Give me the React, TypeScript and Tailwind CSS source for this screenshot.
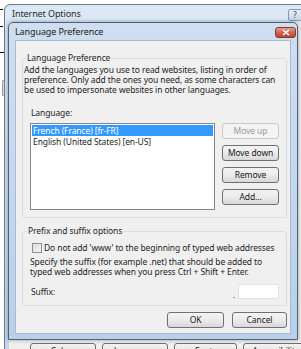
import React from 'react';

const Btn = ({ label, disabled = false, className = '' }: { label: string; disabled?: boolean; className?: string }) => (
  <div
    className={`flex h-[16px] shrink-0 items-center justify-center rounded-[3px] border ${
      disabled
        ? 'border-[#c5c9cc] bg-[#f4f4f4] text-[#9a9a9a]'
        : 'border-[#707070] bg-gradient-to-b from-[#f3f3f3] via-[#ebebeb] to-[#d8d8d8] text-[#1a1a1a]'
    } ${className}`}
  >
    {label}
  </div>
);

const App: React.FC = () => {
  return (
    <div className="relative h-[349px] w-[301px] overflow-hidden whitespace-nowrap bg-white font-['Noto_Sans',sans-serif] text-[8.5px] leading-[10px] tracking-[-0.1px] text-[#1e1e1e]">
      {/* bits of windows behind */}
      <div className="absolute left-0 top-[9px] h-[1px] w-[3px] bg-black" />
      <div className="absolute left-0 top-[26px] h-[1px] w-[3px] bg-black" />
      <div className="absolute left-0 top-[52px] h-[1px] w-[4px] bg-black" />
      <div className="absolute left-[2px] top-[80px] h-[16px] w-[3px] rounded-[1px] border border-[#9a9a9a] bg-[#e4e4e4]" />

      {/* Internet Options window */}
      <div className="absolute left-[4px] top-[4px] flex h-[360px] w-[310px] flex-col rounded-t-[6px] border border-[#6a7b90] bg-gradient-to-b from-[#dce8f5] to-[#c3d6ec]">
        <div className="flex h-[18px] items-center justify-between pl-[7px] pr-[3px] text-[9px] text-[#2a2a2a]">
          <span>Internet Options</span>
          <div className="mr-[8px] mt-[2px] flex h-[12px] w-[14px] items-center justify-center rounded-[2px] border border-[#8a9bb0] bg-gradient-to-b from-[#e8eef6] to-[#c9d6e6] text-[8px] text-[#444]">
            ?
          </div>
        </div>
        <div className="flex-1 px-[4px]">
          <div className="h-full bg-[#f0f0f0]">
            <div className="flex gap-[6px] pl-[21px] pt-[320px]">
              {['Colors', 'Languages', 'Fonts', 'Accessibility'].map((t, i) => (
                <div
                  key={t}
                  className={`flex h-[16px] items-center justify-center rounded-[3px] border border-[#707070] bg-gradient-to-b from-[#f3f3f3] to-[#dcdcdc] ${
                    i === 2 ? 'w-[63px]' : 'w-[67px]'
                  }`}
                >
                  {t}
                </div>
              ))}
            </div>
          </div>
        </div>
      </div>

      {/* Language Preference dialog */}
      <div className="absolute left-[8px] top-[22px] flex h-[318px] w-[290px] flex-col rounded-t-[5px] border border-[#4f6279] bg-gradient-to-b from-[#cfdff1] to-[#b9d0ea] shadow-[0_0_4px_rgba(0,0,0,0.35)]">
        <div className="flex h-[17px] items-center justify-between pl-[6px] pr-[1px]">
          <span className="text-[9px] text-[#1a1a1a]">Language Preference</span>
          <div className="mt-[2px] flex h-[11px] w-[21px] items-center justify-center rounded-[3px] border border-[#7a3b33] bg-gradient-to-b from-[#e8a090] via-[#d2634f] to-[#c0442e]">
            <svg width="8" height="7" viewBox="0 0 8 7">
              <path d="M1 1 L7 6 M7 1 L1 6" stroke="white" strokeWidth="1.6" />
            </svg>
          </div>
        </div>

        <div className="flex-1 px-[6px] pb-[5px]">
          <div className="flex h-full flex-col border border-[#a9bbd2] bg-[#f0f0f0] pl-[6px] pr-[3px]">
            <fieldset className="mt-[12px] rounded-[3px] border border-[#d5dfe5] pb-[7px] pl-[1px] pr-[7px]">
              <legend className="ml-[2px] px-[1px]">Language Preference</legend>
              <p className="mt-[2px]">
                Add the languages you use to read websites, listing in order of
                <br />
                preference. Only add the ones you need, as some characters can
                <br />
                be used to impersonate websites in other languages.
              </p>
              <div className="ml-[7px] mt-[13px]">Language:</div>
              <div className="ml-[6px] mt-[5px] flex gap-[7px]">
                <div className="h-[87px] w-[185px] border border-[#828790] bg-white p-[1px] leading-[11px]">
                  <div className="bg-[#3399ff] px-[1px] text-white">French (France) [fr-FR]</div>
                  <div className="px-[1px]">English (United States) [en-US]</div>
                </div>
                <div className="flex w-[57px] flex-col gap-[6px]">
                  <Btn label="Move up" disabled />
                  <Btn label="Move down" />
                  <Btn label="Remove" />
                  <Btn label="Add..." />
                </div>
              </div>
            </fieldset>

            <fieldset className="mt-[8px] rounded-[3px] border border-[#d5dfe5] pb-[6px] pl-[1px] pr-[7px]">
              <legend className="ml-[3px] px-[1px]">Prefix and suffix options</legend>
              <div className="ml-[8px] mt-[6px] flex h-[11px] items-center gap-[2px]">
                <div className="h-[10px] w-[10px] shrink-0 border border-[#8e8f8f] bg-gradient-to-br from-[#dcdcdc] to-[#f6f6f6]" />
                <span>Do not add 'www' to the beginning of typed web addresses</span>
              </div>
              <p className="ml-[6px] mt-[4px]">
                Specify the suffix (for example .net) that should be added to
                <br />
                typed web addresses when you press Ctrl + Shift + Enter.
              </p>
              <div className="mt-[7px] flex items-center justify-between pl-[7px]">
                <span>Suffix:</span>
                <div className="flex items-end gap-[3px]">
                  <span className="leading-[8px]">.</span>
                  <div className="h-[15px] w-[41px] border border-[#e2e3ea] bg-white" />
                </div>
              </div>
            </fieldset>

            <div className="mt-[6px] flex justify-end gap-[8px]">
              <Btn label="OK" className="w-[57px]" />
              <Btn label="Cancel" className="w-[55px]" />
            </div>
          </div>
        </div>
      </div>
    </div>
  );
};

export default App;
